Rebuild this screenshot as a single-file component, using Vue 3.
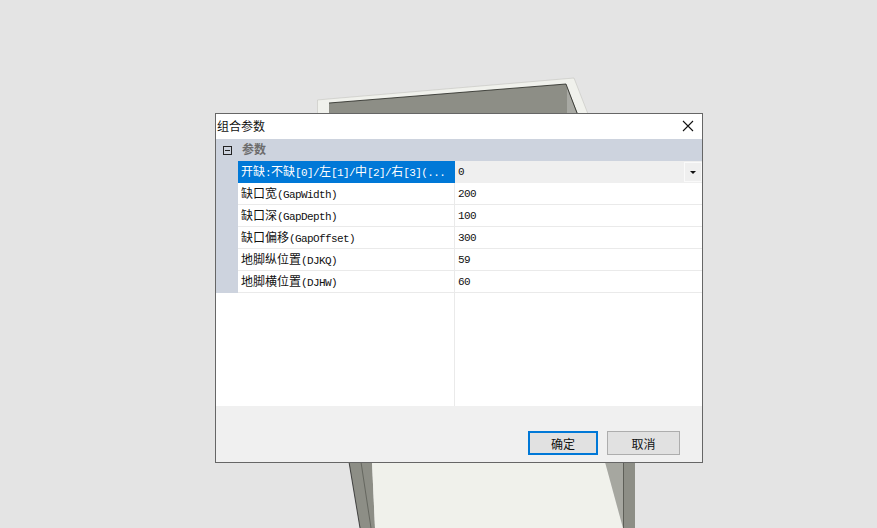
<script setup>
const params = [
  { name: '开缺:不缺[0]/左[1]/中[2]/右[3](...', value: '0', selected: true },
  { name: '缺口宽(GapWidth)', value: '200' },
  { name: '缺口深(GapDepth)', value: '100' },
  { name: '缺口偏移(GapOffset)', value: '300' },
  { name: '地脚纵位置(DJKQ)', value: '59' },
  { name: '地脚横位置(DJHW)', value: '60' },
]

// CJK glyphs are 12px wide, latin ones 6px like the original bitmap font
function parts(text) {
  return text.match(/[\u4e00-\u9fff]+|[^\u4e00-\u9fff]+/g).map(t => ({
    text: t,
    latin: !/[\u4e00-\u9fff]/.test(t),
  }))
}
</script>

<template>
  <div class="page">
    <!-- model behind the dialog -->
    <svg class="model" width="877" height="528" viewBox="0 0 877 528">
      <polygon points="317.5,100 328,99 574,78 588,114 317.5,114" fill="#f0f1ec" stroke="#c4c5c0" stroke-width="0.6" />
      <polygon points="329,103 566,84 578,114 329,114" fill="#8d8e86" />
      <polygon points="567,88 577.5,114 567,114" fill="#a8a9a3" />
      <polyline points="329,103 566,84 577,113" fill="none" stroke="#23241f" stroke-width="0.8" />
      <polygon points="349,462 372,462 375,528 360,528" fill="#8d8e86" />
      <line x1="349" y1="462" x2="360" y2="528" stroke="#222" stroke-width="0.8" />
      <line x1="361" y1="462" x2="371" y2="528" stroke="#55564f" stroke-width="0.7" />
      <polygon points="372,462 605,462 623,528 375,528" fill="#f0f1eb" />
      <polygon points="605,462 623,462 623,528" fill="#a6a7a0" />
      <rect x="623" y="462" width="12" height="66" fill="#8d8e86" />
      <line x1="623.5" y1="462" x2="623.5" y2="528" stroke="#5e5f58" />
    </svg>

    <div class="dialog">
      <div class="titlebar">
        <span class="title">组合参数</span>
        <svg class="close" width="12" height="12" viewBox="0 0 12 12">
          <path d="M1 1 L11 11 M11 1 L1 11" stroke="#111" stroke-width="1.1" fill="none" />
        </svg>
      </div>

      <div class="grid">
        <div class="group-row">
          <svg class="toggle" width="9" height="9" viewBox="0 0 9 9">
            <rect x="0.5" y="0.5" width="8" height="8" fill="none" stroke="#222" />
            <path d="M2 4.5 H7" stroke="#222" />
          </svg>
          <span class="group-label">参数</span>
        </div>

        <div class="rows">
          <div class="gutter"></div>
          <div class="table">
            <div v-for="p in params" :key="p.name" class="row" :class="{ selected: p.selected }">
              <div class="name"><span v-for="(s, i) in parts(p.name)" :key="i" :class="{ latin: s.latin }">{{ s.text }}</span></div>
              <div class="value">
                <span>{{ p.value }}</span>
                <div v-if="p.selected" class="drop"><i class="arrow"></i></div>
              </div>
            </div>
            <div class="rest"></div>
          </div>
        </div>
      </div>

      <div class="footer">
        <button class="btn primary">确定</button>
        <button class="btn cancel">取消</button>
      </div>
    </div>
  </div>
</template>

<style>
html, body { margin: 0; padding: 0; }
</style>

<style scoped>
.page {
  position: relative;
  width: 877px;
  height: 528px;
  overflow: hidden;
  background: #e4e4e4;
  padding: 113px 0 0 215px;
  box-sizing: border-box;
  font-family: "Noto Sans CJK SC", "Liberation Sans", sans-serif;
  font-size: 12px;
  color: #111;
}
.model { position: absolute; left: 0; top: 0; }

.dialog {
  position: relative;
  width: 488px;
  height: 350px;
  box-sizing: border-box;
  border: 1px solid #666;
  background: #f0f0f0;
  display: flex;
  flex-direction: column;
}

.titlebar {
  height: 25px;
  box-sizing: border-box;
  background: #fff;
  display: flex;
  align-items: center;
  justify-content: space-between;
  padding: 0 8px 1px 1px;
  flex-shrink: 0;
}
.title { line-height: 24px; margin-top: -1px; }

.grid { height: 267px; background: #fff; display: flex; flex-direction: column; flex-shrink: 0; }
.group-row {
  height: 22px;
  background: #cdd3de;
  display: flex;
  align-items: center;
  padding-left: 7px;
  flex-shrink: 0;
}
.toggle { margin-right: 10px; }
.group-label { font-weight: 700; color: #6d6d6d; line-height: 20px; margin-bottom: 3px; }

.rows { flex: 1; display: flex; min-height: 0; }
.gutter { width: 22px; height: 132px; background: #cdd3de; flex-shrink: 0; }
.table { flex: 1; display: flex; flex-direction: column; }

.row { height: 22px; display: flex; flex-shrink: 0; box-sizing: border-box; border-bottom: 1px solid #eaeaea; }
.name {
  width: 217px;
  box-sizing: border-box;
  padding-left: 3px;
  border-right: 1px solid #eaeaea;
  line-height: 20px;
  white-space: nowrap;
  overflow: hidden;
}
.latin { font-family: "Liberation Mono", monospace; font-size: 11px; letter-spacing: -0.6px; }
.value {
  flex: 1;
  display: flex;
  align-items: center;
  justify-content: space-between;
  padding-left: 3px;
  font-family: "Liberation Mono", monospace;
  font-size: 11px;
  letter-spacing: -0.6px;
}
.row.selected { border-bottom: none; }
.row.selected .name { background: #0078d7; color: #fff; border-right: none; }
.row.selected .value { background: #efefef; }
.drop {
  width: 18px;
  height: 20px;
  box-sizing: border-box;
  border: 1px solid #fafafa;
  display: flex;
  align-items: center;
  justify-content: center;
}
.arrow {
  width: 0;
  height: 0;
  border-left: 3px solid transparent;
  border-right: 3px solid transparent;
  border-top: 3px solid #111;
}
.rest { flex: 1; margin-left: 216px; border-left: 1px solid #eaeaea; }

.footer {
  flex: 1;
  display: flex;
  justify-content: flex-end;
  gap: 9px;
  padding: 25px 22px 0 0;
}
.btn {
  height: 24px;
  box-sizing: border-box;
  background: #e1e1e1;
  font-family: inherit;
  font-size: 12px;
  color: #111;
  padding: 0;
}
.primary { width: 70px; border: 2px solid #0078d7; }
.cancel { width: 73px; border: 1px solid #adadad; }
</style>
